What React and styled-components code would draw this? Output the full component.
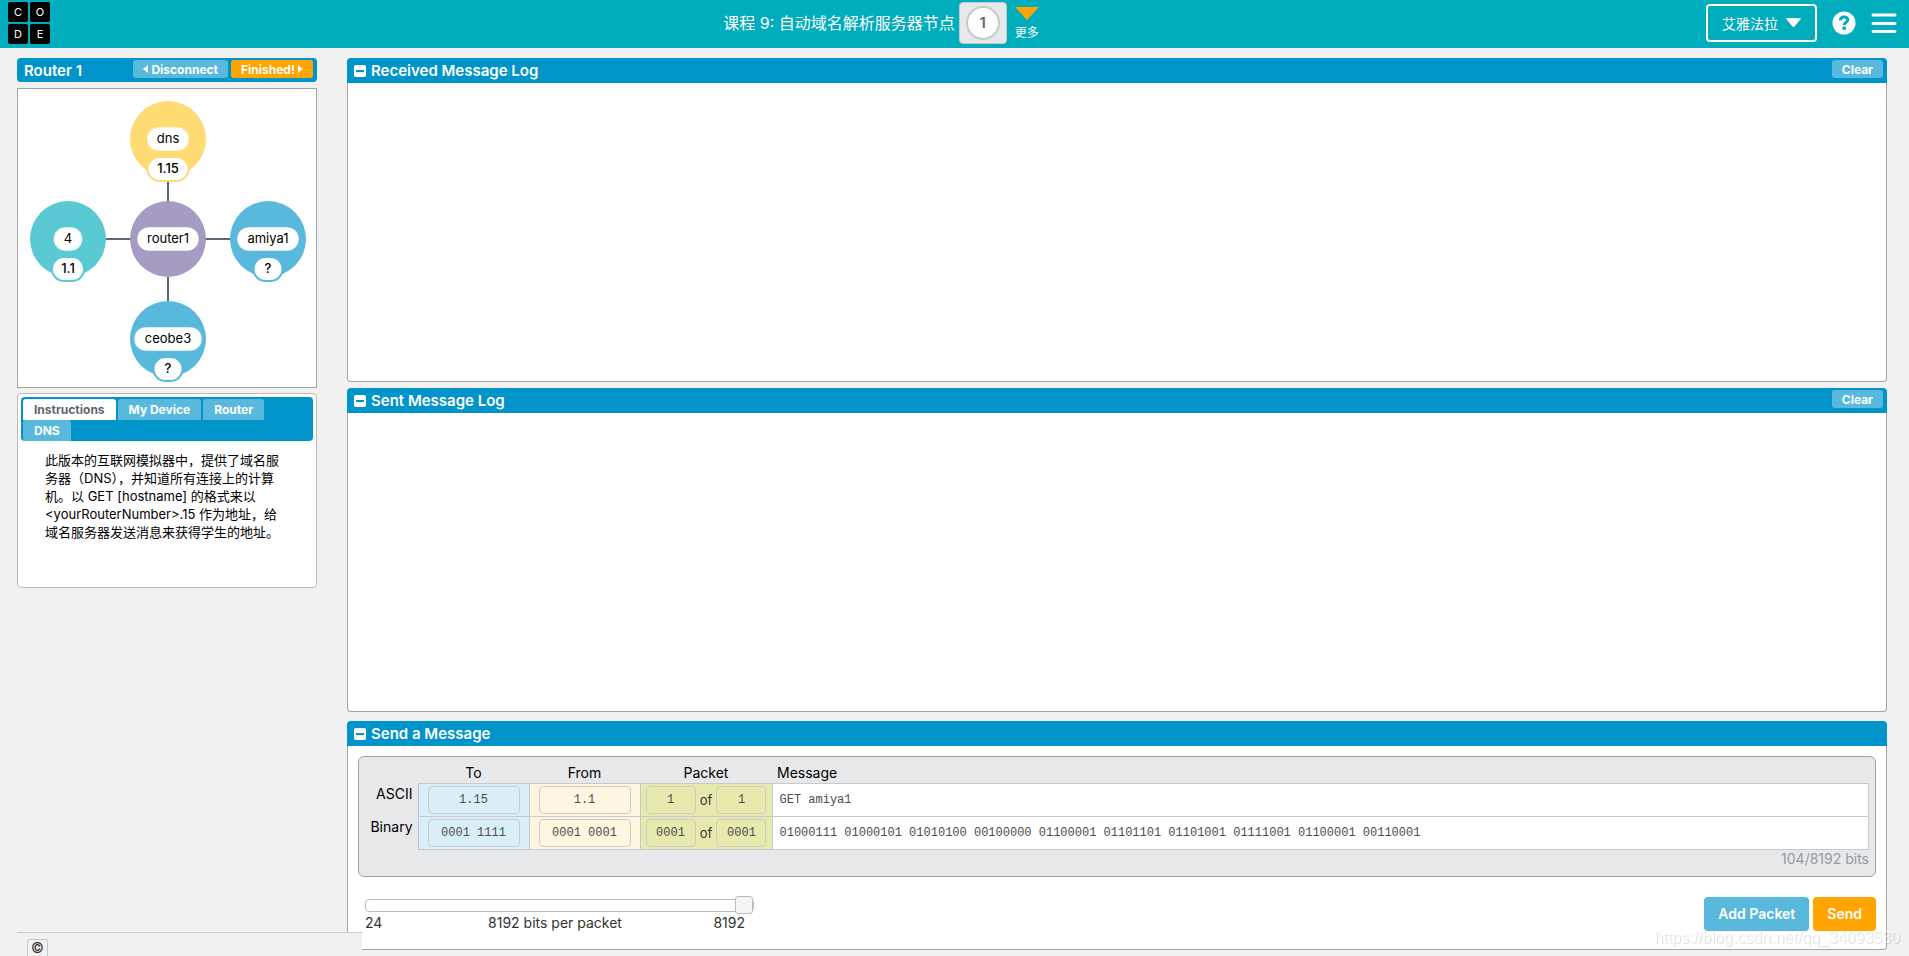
import { useState } from 'react'
import styled, { createGlobalStyle } from 'styled-components'

const colors = {
  teal: '#00adbc',
  blue: '#0094ca',
  lightBlue: '#59b9dc',
  orange: '#ffa400',
  page: '#f1f1f1',
  grey: '#e7e8ea',
  line: '#c6cacd',
  border: '#a4a4a4',
  charcoal: '#5b6770',
}

const fonts = {
  main: "Inter, 'Noto Sans CJK SC', sans-serif",
  mono: "'Liberation Mono', 'Noto Sans CJK SC', monospace",
}

const GlobalStyle = createGlobalStyle`
  * {
    box-sizing: border-box;
  }

  body {
    margin: 0;
    background-color: ${colors.page};
    font-family: ${fonts.main};
    font-size: 13px;
    line-height: 18px;
    color: #000;
  }

  button, input {
    font-family: inherit;
    margin: 0;
  }
`

const Header = styled.header`
  display: flex;
  justify-content: space-between;
  align-items: flex-start;
  height: 48px;
  padding: 2px 12px 0 8px;
  background-color: ${colors.teal};
  color: #fff;
`

const Logo = styled.a`
  display: grid;
  grid-template-columns: 20px 20px;
  gap: 2px;
  color: #fff;
  text-decoration: none;
`

const LogoTile = styled.span`
  height: 20px;
  border-radius: 2px;
  background-color: #000;
  font-size: 11px;
  line-height: 20px;
  text-align: center;
`

const Lesson = styled.div`
  display: flex;
  align-items: flex-start;
  margin-left: 6px;
`

const LessonName = styled.h1`
  margin: 0;
  font-size: 16px;
  font-weight: 400;
  line-height: 42px;
`

const Progress = styled.div`
  display: flex;
  align-items: center;
  justify-content: center;
  width: 48px;
  height: 42px;
  margin: 0 8px 0 4px;
  border: 1px solid ${colors.line};
  border-radius: 4px;
  background-color: ${colors.grey};
`

const Bubble = styled.a`
  width: 34px;
  height: 34px;
  border: 2px solid ${colors.line};
  border-radius: 50%;
  background-color: #fff;
  color: ${colors.charcoal};
  font-size: 15px;
  font-weight: 600;
  line-height: 30px;
  text-align: center;
  text-decoration: none;
`

const More = styled.button`
  display: flex;
  flex-direction: column;
  align-items: center;
  gap: 4px;
  padding: 5px 0 0;
  border: none;
  background: none;
  color: #fff;
  font-size: 12px;
  line-height: 18px;
  cursor: pointer;
`

const HeaderRight = styled.div`
  display: flex;
  align-items: center;
  gap: 15px;
  padding-top: 2px;
`

const UserButton = styled.button`
  display: flex;
  align-items: center;
  gap: 8px;
  height: 38px;
  padding: 0 14px;
  border: 2px solid #fff;
  border-radius: 4px;
  background: none;
  color: #fff;
  font-size: 14px;
  cursor: pointer;
`

const IconButton = styled.button`
  display: flex;
  padding: 0;
  border: none;
  background: none;
  cursor: pointer;
`

const Page = styled.main`
  display: grid;
  grid-template-columns: 300px minmax(0, 1fr);
  gap: 30px;
  padding: 10px 22px 6px 17px;
`

const Sidebar = styled.aside`
  display: flex;
  flex-direction: column;
`

const Content = styled.div`
  display: flex;
  flex-direction: column;
`

const RouterBar = styled.div`
  display: flex;
  align-items: flex-start;
  gap: 3px;
  height: 24px;
  padding: 2px 4px 0 7px;
  border-radius: 4px;
  background-color: ${colors.blue};
`

const BarTitle = styled.h2`
  flex: 1;
  margin: 0;
  color: #fff;
  font-size: 15px;
  font-weight: 600;
  line-height: 22px;
`

const SmallButton = styled.button`
  display: flex;
  align-items: center;
  gap: 3px;
  height: 18px;
  padding: 0 10px;
  border: none;
  border-radius: 3px;
  background-color: ${({ $color }) => $color || colors.lightBlue};
  color: #fff;
  font-size: 12px;
  font-weight: 700;
  cursor: pointer;
`

const Network = styled.div`
  margin-top: 6px;
  border: 1px solid ${colors.border};
  background-color: #fff;

  svg {
    display: block;
    width: 100%;
  }
`

const NodeText = styled.text`
  font-family: ${fonts.main};
  font-size: 13px;
  font-weight: ${({ $bold }) => ($bold ? 500 : 400)};
  text-anchor: middle;
`

const TabPanel = styled.section`
  min-height: 195px;
  margin-top: 5px;
  padding: 3px;
  border: 1px solid #bbb;
  border-radius: 4px;
  background-color: #fff;
`

const TabList = styled.div`
  display: flex;
  flex-wrap: wrap;
  column-gap: 2px;
  padding: 2px 2px 0;
  border-radius: 4px;
  background-color: ${colors.blue};
`

const Tab = styled.button`
  height: 21px;
  padding: 0 11px;
  border: none;
  border-radius: 3px 3px 0 0;
  background-color: ${({ $active }) => ($active ? '#fff' : colors.lightBlue)};
  color: ${({ $active }) => ($active ? colors.charcoal : '#fff')};
  font-size: 12px;
  font-weight: 700;
  cursor: pointer;
`

const Instructions = styled.p`
  margin: 10px 0 0;
  padding: 0 24px;
`

const Panel = styled.section`
  margin-bottom: ${({ $gap }) => $gap || 0}px;
`

const PanelHeader = styled.div`
  display: flex;
  align-items: flex-start;
  gap: 5px;
  height: 25px;
  padding: 2px 4px 0 7px;
  border-radius: 4px 4px 0 0;
  background-color: ${colors.blue};
`

const Collapse = styled(IconButton)`
  margin-top: 5px;
`

const PanelBody = styled.div`
  border: 1px solid ${colors.border};
  border-top: none;
  border-radius: 0 0 4px 4px;
  background-color: #fff;
`

const LogBody = styled(PanelBody)`
  height: 299px;
  overflow: auto;
`

const SendBody = styled(PanelBody)`
  padding: 10px 10px 18px;
`

const Packet = styled.div`
  padding: 7px 6px 8px 10px;
  border: 1px solid ${colors.border};
  border-radius: 6px;
  background-color: ${colors.grey};
`

const PacketTable = styled.table`
  width: 100%;
  border-collapse: collapse;
  table-layout: fixed;
`

const ColHead = styled.th`
  width: ${({ $width }) => ($width ? `${$width}px` : 'auto')};
  height: 19px;
  padding: ${({ $left }) => ($left ? '0 5px' : 0)};
  font-size: 14px;
  font-weight: 400;
  text-align: ${({ $left }) => ($left ? 'left' : 'center')};
`

const RowHead = styled.th`
  padding: 2px 5px 0 0;
  font-size: 14px;
  font-weight: 400;
  text-align: right;
  vertical-align: top;
`

const Cell = styled.td`
  height: 33px;
  padding: 0 ${({ $pad }) => $pad || 0}px;
  border: 1px solid ${colors.line};
  background-color: ${({ $color }) => $color || '#fff'};
  color: #333;
`

const CellRow = styled.div`
  display: flex;
  align-items: center;
  justify-content: space-between;
`

const Field = styled.input`
  width: ${({ $width }) => ($width ? `${$width}px` : '100%')};
  height: 28px;
  padding: 0;
  border: 1px solid #ccc;
  border-radius: 4px;
  background: transparent;
  color: #4d4d4d;
  font-family: ${fonts.mono};
  font-size: 12px;
  text-align: center;
`

const MessageField = styled(Field)`
  padding: 0 7px;
  border: none;
  text-align: left;
`

const BitCount = styled.div`
  color: #949ca2;
  font-size: 14px;
  text-align: right;
`

const SendRow = styled.div`
  display: flex;
  align-items: flex-start;
  justify-content: space-between;
  margin-top: 20px;
`

const SizeControl = styled.div`
  width: 380px;
  margin-left: 7px;
  color: #333;
`

const Range = styled.input`
  display: block;
  appearance: none;
  width: 389px;
  height: 18px;
  background: transparent;

  &::-webkit-slider-runnable-track {
    height: 13px;
    border: 1px solid #bbb;
    border-radius: 4px;
    background: #fff;
  }

  &::-webkit-slider-thumb {
    appearance: none;
    width: 18px;
    height: 18px;
    margin-top: -4px;
    border: 1px solid #bbb;
    border-radius: 3px;
    background: #f4f4f4;
  }
`

const RangeLabels = styled.div`
  display: grid;
  grid-template-columns: 1fr auto 1fr;
  font-size: 14px;
  line-height: 16px;

  span:last-child {
    text-align: right;
  }
`

const Actions = styled.div`
  display: flex;
  gap: 4px;
`

const ActionButton = styled.button`
  height: 34px;
  padding: 0 14px;
  border: none;
  border-radius: 4px;
  background-color: ${({ $color }) => $color};
  color: #fff;
  font-size: 14px;
  font-weight: 600;
  cursor: pointer;
`

const Footer = styled.footer`
  position: fixed;
  bottom: 0;
  left: 17px;
  width: 345px;
  height: 24px;
  padding: 6px 10px 0;
  border-top: 1px solid ${colors.line};
  background-color: ${colors.page};
`

const Copyright = styled.button`
  display: block;
  width: 21px;
  height: 17px;
  padding: 0;
  border: 1px solid ${colors.line};
  border-bottom: none;
  border-radius: 3px 3px 0 0;
  background: none;
  color: #333;
  font-size: 14px;
  line-height: 16px;
`

const Watermark = styled.div`
  position: fixed;
  right: 9px;
  bottom: 9px;
  color: rgba(255, 255, 255, 0.7);
  font-family: 'Liberation Sans', sans-serif;
  font-size: 16px;
  text-shadow: 1px 1px 1px rgba(0, 0, 0, 0.14);
  pointer-events: none;
`

const nodes = [
  { x: 150, y: 50, color: '#ffdb74', name: 'dns', nameWidth: 42, address: '1.15', addressWidth: 41 },
  { x: 50, y: 150, color: '#59cad3', name: '4', nameWidth: 29, address: '1.1', addressWidth: 32 },
  { x: 250, y: 150, color: '#59b9dc', name: 'amiya1', nameWidth: 62, address: '?', addressWidth: 29 },
  { x: 150, y: 250, color: '#59b9dc', name: 'ceobe3', nameWidth: 68, address: '?', addressWidth: 29 },
  { x: 150, y: 150, color: '#a69bc1', name: 'router1', nameWidth: 62 },
]

const tabs = ['Instructions', 'My Device', 'Router', 'DNS']

const Pill = ({ y, width, color, bold, children }) => (
  <>
    <rect
      x={-width / 2}
      y={y - 12}
      width={width}
      height={24}
      rx={12}
      fill="#fff"
      stroke={color}
      strokeWidth={bold ? 2 : 0.5}
    />
    <NodeText y={y + 4} $bold={bold}>
      {children}
    </NodeText>
  </>
)

const NetworkMap = () => (
  <Network>
    <svg viewBox="0 0 298 298" role="img" aria-label="Network">
      <path d="M150 50V250M50 150H250" stroke={colors.charcoal} strokeWidth="2" />
      {nodes.map((node) => (
        <g key={node.name} transform={`translate(${node.x} ${node.y})`}>
          <circle r="38" fill={node.color} />
          <Pill y={0} width={node.nameWidth} color={node.color}>
            {node.name}
          </Pill>
          {node.address && (
            <Pill y={30} width={node.addressWidth} color={node.color} bold>
              {node.address}
            </Pill>
          )}
        </g>
      ))}
    </svg>
  </Network>
)

const Minus = ({ label }) => (
  <Collapse type="button" aria-label={`Collapse ${label}`}>
    <svg width="12" height="12" viewBox="0 0 12 12">
      <rect width="12" height="12" rx="2" fill="#fff" />
      <rect x="2" y="5" width="8" height="2" fill={colors.blue} />
    </svg>
  </Collapse>
)

const Log = ({ title, gap }) => (
  <Panel $gap={gap}>
    <PanelHeader>
      <Minus label={title} />
      <BarTitle>{title}</BarTitle>
      <SmallButton type="button">Clear</SmallButton>
    </PanelHeader>
    <LogBody />
  </Panel>
)

const PacketRow = ({ label, to, from, index, count, message }) => (
  <tr>
    <RowHead scope="row">{label}</RowHead>
    <Cell $color="#d9eff7" $pad={9}>
      <CellRow>
        <Field aria-label={`${label} to`} defaultValue={to} />
      </CellRow>
    </Cell>
    <Cell $color="#fff6df" $pad={9}>
      <CellRow>
        <Field aria-label={`${label} from`} defaultValue={from} />
      </CellRow>
    </Cell>
    <Cell $color="#e7e9ad" $pad={5}>
      <CellRow>
        <Field aria-label={`${label} packet number`} $width={50} defaultValue={index} />
        of
        <Field aria-label={`${label} packet count`} $width={50} defaultValue={count} />
      </CellRow>
    </Cell>
    <Cell>
      <CellRow>
        <MessageField aria-label={`${label} message`} defaultValue={message} />
      </CellRow>
    </Cell>
  </tr>
)

const App = () => {
  const [activeTab, setActiveTab] = useState('Instructions')
  const [size, setSize] = useState(8192)

  return (
    <>
      <GlobalStyle />
      <Header>
        <Logo href="#" aria-label="Code">
          {['C', 'O', 'D', 'E'].map((letter) => (
            <LogoTile key={letter}>{letter}</LogoTile>
          ))}
        </Logo>
        <Lesson>
          <LessonName>课程 9: 自动域名解析服务器节点</LessonName>
          <Progress>
            <Bubble href="#">1</Bubble>
          </Progress>
          <More type="button">
            <svg width="24" height="13" viewBox="0 0 24 13">
              <path d="M0 0H24L12 13Z" fill={colors.orange} />
            </svg>
            更多
          </More>
        </Lesson>
        <HeaderRight>
          <UserButton type="button">
            艾雅法拉
            <svg width="15" height="10" viewBox="0 0 15 10">
              <path d="M1 0H14Q15.5 0 14.5 1.2L8.3 8.7Q7.5 9.5 6.7 8.700L.5 1.2Q-.5 0 1 0Z" fill="#fff" />
            </svg>
          </UserButton>
          <IconButton type="button" aria-label="Help">
            <svg width="24" height="24" viewBox="0 0 24 24">
              <circle cx="12" cy="12" r="11.5" fill="#fff" />
              <path
                d="M8.3 9.3C8.5 6.9 10 5.9 12 5.9C14.2 5.9 15.7 7.1 15.7 8.9C15.7 11.4 12.2 11.4 12.2 14"
                fill="none"
                stroke={colors.teal}
                strokeWidth="3"
              />
              <rect x="10.5" y="15.6" width="3.4" height="3.2" fill={colors.teal} />
            </svg>
          </IconButton>
          <IconButton type="button" aria-label="Menu">
            <svg width="26" height="20" viewBox="0 0 26 20">
              <path d="M2 2H24M2 10.5H24M2 18.5H24" stroke="#fff" strokeWidth="3" strokeLinecap="round" />
            </svg>
          </IconButton>
        </HeaderRight>
      </Header>

      <Page>
        <Sidebar>
          <RouterBar>
            <BarTitle>Router 1</BarTitle>
            <SmallButton type="button">
              <svg width="5" height="8" viewBox="0 0 5 8">
                <path d="M5 0V8L0 4Z" fill="#fff" />
              </svg>
              Disconnect
            </SmallButton>
            <SmallButton type="button" $color={colors.orange}>
              Finished!
              <svg width="5" height="8" viewBox="0 0 5 8">
                <path d="M0 0V8L5 4Z" fill="#fff" />
              </svg>
            </SmallButton>
          </RouterBar>
          <NetworkMap />
          <TabPanel>
            <TabList role="tablist">
              {tabs.map((tab) => (
                <Tab
                  key={tab}
                  type="button"
                  role="tab"
                  aria-selected={tab === activeTab}
                  $active={tab === activeTab}
                  onClick={() => setActiveTab(tab)}
                >
                  {tab}
                </Tab>
              ))}
            </TabList>
            {activeTab === 'Instructions' && (
              <Instructions lang="zh-CN">
                此版本的互联网模拟器中，提供了域名服务器（DNS），并知道所有连接上的计算机。以 GET [hostname] 的格式来以
                &lt;yourRouterNumber&gt;.15 作为地址，给域名服务器发送消息来获得学生的地址。
              </Instructions>
            )}
          </TabPanel>
        </Sidebar>

        <Content>
          <Log title="Received Message Log" gap={6} />
          <Log title="Sent Message Log" gap={9} />
          <Panel>
            <PanelHeader>
              <Minus label="Send a Message" />
              <BarTitle>Send a Message</BarTitle>
            </PanelHeader>
            <SendBody>
              <Packet>
                <PacketTable>
                  <thead>
                    <tr>
                      <ColHead $width={49} />
                      <ColHead $width={111}>To</ColHead>
                      <ColHead $width={111}>From</ColHead>
                      <ColHead $width={132}>Packet</ColHead>
                      <ColHead $left>Message</ColHead>
                    </tr>
                  </thead>
                  <tbody>
                    <PacketRow label="ASCII" to="1.15" from="1.1" index="1" count="1" message="GET amiya1" />
                    <PacketRow
                      label="Binary"
                      to="0001 1111"
                      from="0001 0001"
                      index="0001"
                      count="0001"
                      message="01000111 01000101 01010100 00100000 01100001 01101101 01101001 01111001 01100001 00110001"
                    />
                  </tbody>
                </PacketTable>
                <BitCount>104/8192 bits</BitCount>
              </Packet>
              <SendRow>
                <SizeControl>
                  <Range
                    type="range"
                    aria-label="Packet size"
                    min="24"
                    max="8192"
                    value={size}
                    onChange={(e) => setSize(e.target.value)}
                  />
                  <RangeLabels>
                    <span>24</span>
                    <span>{size} bits per packet</span>
                    <span>8192</span>
                  </RangeLabels>
                </SizeControl>
                <Actions>
                  <ActionButton type="button" $color={colors.lightBlue}>
                    Add Packet
                  </ActionButton>
                  <ActionButton type="button" $color={colors.orange}>
                    Send
                  </ActionButton>
                </Actions>
              </SendRow>
            </SendBody>
          </Panel>
        </Content>
      </Page>

      <Footer>
        <Copyright type="button">©</Copyright>
      </Footer>
      <Watermark>https://blog.csdn.net/qq_34093530</Watermark>
    </>
  )
}

export default App
